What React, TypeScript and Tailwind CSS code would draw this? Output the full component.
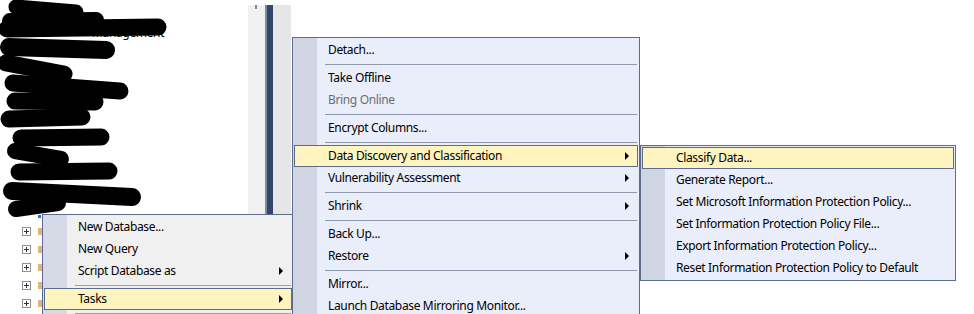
import React from "react"

type Entry = { label: string; arrow?: boolean; disabled?: boolean; active?: boolean } | "sep"

const leftItems: Entry[] = [
  { label: "New Database..." },
  { label: "New Query" },
  { label: "Script Database as", arrow: true },
  "sep",
  { label: "Tasks", arrow: true, active: true },
  "sep",
]

const mainItems: Entry[] = [
  { label: "Detach..." },
  "sep",
  { label: "Take Offline" },
  { label: "Bring Online", disabled: true },
  "sep",
  { label: "Encrypt Columns..." },
  "sep",
  { label: "Data Discovery and Classification", arrow: true, active: true },
  { label: "Vulnerability Assessment", arrow: true },
  "sep",
  { label: "Shrink", arrow: true },
  "sep",
  { label: "Back Up..." },
  { label: "Restore", arrow: true },
  "sep",
  { label: "Mirror..." },
  { label: "Launch Database Mirroring Monitor..." },
]

const subItems: Entry[] = [
  { label: "Classify Data...", active: true },
  { label: "Generate Report..." },
  { label: "Set Microsoft Information Protection Policy..." },
  { label: "Set Information Protection Policy File..." },
  { label: "Export Information Protection Policy..." },
  { label: "Reset Information Protection Policy to Default" },
]

const Arrow = () => (
  <span className="block w-0 h-0 border-y-[4px] border-y-transparent border-l-[4px] border-l-black" />
)

const MenuList = ({ items, sepColor }: { items: Entry[]; sepColor: string }) => (
  <>
    {items.map((item, i) =>
      item === "sep" ? (
        <div key={i} className="h-[6px] flex items-center pl-[31px] pr-[1px]">
          <div className={`h-px w-full ${sepColor}`} />
        </div>
      ) : (
        <div
          key={i}
          className={`h-[22px] flex items-center justify-between pl-[33px] pr-[8px] border ${
            item.active ? "bg-[#fdf4bf] border-[#5d6c8c]" : "border-transparent"
          } ${item.disabled ? "text-[#6d6d6d]" : "text-black"}`}
        >
          <span className="whitespace-nowrap">{item.label}</span>
          {item.arrow && <Arrow />}
        </div>
      )
    )}
  </>
)

// redaction marks drawn over the tree
const Scribbles = () => (
  <svg className="absolute left-0 top-0" width="250" height="224" viewBox="0 0 250 224">
    <g stroke="#000" strokeLinecap="round" fill="none">
      <path d="M16 7 L76 12" strokeWidth="15" />
      <path d="M10 21 L96 20" strokeWidth="16" />
      <path d="M7 29 L158 27" strokeWidth="17" />
      <path d="M9 47 L106 50" strokeWidth="18" />
      <path d="M6 63 L64 74" strokeWidth="17" />
      <path d="M13 83 L120 91" strokeWidth="17" />
      <path d="M15 101 L95 102" strokeWidth="17" />
      <path d="M9 119 L82 117" strokeWidth="17" />
      <path d="M21 138 L101 137" strokeWidth="17" />
      <path d="M15 151 L61 159" strokeWidth="16" />
      <path d="M19 172 L109 171" strokeWidth="17" />
      <path d="M12 191 L132 197" strokeWidth="18" />
      <path d="M16 209 L58 203" strokeWidth="16" />
    </g>
  </svg>
)

const PlusBox = () => (
  <span className="relative block w-[9px] h-[9px] border border-[#919191] bg-white">
    <span className="absolute left-[1px] top-[3px] w-[5px] h-px bg-[#1e395b]" />
    <span className="absolute left-[3px] top-[1px] w-px h-[5px] bg-[#1e395b]" />
  </span>
)

export default function App() {
  return (
    <div className="relative w-[974px] h-[314px] overflow-hidden bg-white text-[12px] tracking-[-0.35px] font-['Segoe_UI','Noto_Sans',sans-serif]">
      <div className="flex h-full">
        {/* object explorer tree */}
        <div className="relative w-[248px] pt-[6px]">
          {Array.from({ length: 12 }).map((_, i) => (
            <div key={i} className="h-[18px] flex items-end pl-[40px] text-black whitespace-nowrap">
              {i === 1 ? <span className="pl-[52px]">Management</span> : null}
            </div>
          ))}
          {[0, 1, 2, 3, 4].map(i => (
            <div key={i} className="h-[18px] flex items-center pl-[22px] gap-[7px]">
              <PlusBox />
              <span className="block w-[12px] h-[7px] bg-[#dcb67a]" />
            </div>
          ))}
          <span className="absolute left-[38px] top-[215px] w-[3px] h-[3px] bg-[#1a73d9]" />
          <Scribbles />
        </div>

        {/* splitter / scrollbar column */}
        <div className="flex pt-[5px] h-full">
          <div className="w-[17px] bg-[#f0f0f0] relative">
            <span className="absolute left-[7px] top-0 w-[2px] h-[4px] bg-[#8a8a8a]" />
          </div>
          <div className="w-[2px] bg-[#7d8aa9]" />
          <div className="w-[6px] bg-[#33476b]" />
          <div className="w-[18px] bg-[#e6e6e8]" />
        </div>
      </div>

      {/* database context menu */}
      <div className="absolute left-[42px] top-[214px] w-[252px] border border-[#5d6c8c] p-[1px] bg-[linear-gradient(90deg,#d5dae6_24px,#f0f0f0_24px)]">
        <MenuList items={leftItems} sepColor="bg-[#a0a0a0]" />
      </div>

      {/* tasks menu */}
      <div className="absolute left-[292px] top-[37px] w-[348px] border border-[#5d6c8c] p-[1px] bg-[linear-gradient(90deg,#cfd5e3_24px,#eaeefa_24px)]">
        <MenuList items={mainItems} sepColor="bg-[#8e98ac]" />
      </div>

      {/* data discovery submenu */}
      <div className="absolute left-[640px] top-[145px] w-[316px] border border-[#5d6c8c] p-[1px] bg-[linear-gradient(90deg,#cfd5e3_24px,#eaeefa_24px)]">
        <MenuList items={subItems} sepColor="bg-[#8e98ac]" />
      </div>
    </div>
  )
}
